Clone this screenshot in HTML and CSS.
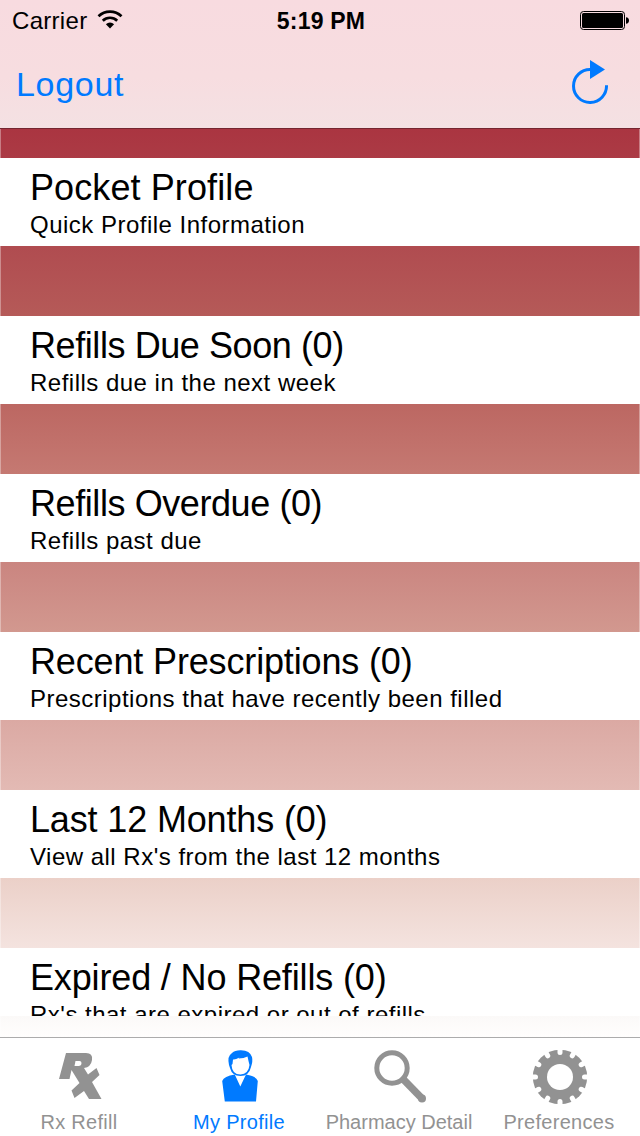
FILE: index.html
```html
<!DOCTYPE html>
<html lang="en">
<head>
    <meta charset="UTF-8">
    <meta name="viewport" content="width=device-width, initial-scale=1.0">
    <title>My Profile</title>
    <link rel="stylesheet" href="styles.css">
</head>
<body>

    <header class="header">
        <div class="status-bar">
            <div class="carrier">
                <span class="carrier-name">Carrier</span>
                <svg class="wifi" width="26" height="20" viewBox="0 0 26 20">
                    <path d="M1.5 6.2 A16.5 16.5 0 0 1 24.5 6.2 M5.8 10.7 A10.3 10.3 0 0 1 20.2 10.7" fill="none" stroke="#000" stroke-width="2.7"/>
                    <path d="M8.9 14.2 A6 6 0 0 1 17.1 14.2 L13 18.4 Z"/>
                </svg>
            </div>
            <div class="clock">5:19 PM</div>
            <div class="battery">
                <svg width="50" height="20" viewBox="0 0 50 20">
                    <rect x="0.5" y="0.5" width="44" height="18" rx="3" fill="none" stroke="#000"/>
                    <rect x="2" y="2" width="41" height="15" rx="1.5"/>
                    <path d="M46 6.2 Q49 6.4 49 9.5 T46 12.8 Z"/>
                </svg>
            </div>
        </div>
        <div class="nav-bar">
            <a class="logout" href="#">Logout</a>
            <svg class="refresh" width="38" height="46" viewBox="0 0 38 46">
                <path d="M18.5 9.5 A16.5 16.5 0 1 0 34.5 25.2" fill="none" stroke="#007aff" stroke-width="3"/>
                <path d="M18 0 L33 9.5 L18 19 Z" fill="#007aff"/>
            </svg>
        </div>
    </header>

    <!-- Profile sections -->
    <main class="content">
        <div class="item">
            <div class="title wide">Pocket Profile</div>
            <div class="subtitle">Quick Profile Information</div>
        </div>
        <div class="item">
            <div class="title tight">Refills Due Soon (0)</div>
            <div class="subtitle">Refills due in the next week</div>
        </div>
        <div class="item">
            <div class="title tight">Refills Overdue (0)</div>
            <div class="subtitle">Refills past due</div>
        </div>
        <div class="item">
            <div class="title">Recent Prescriptions (0)</div>
            <div class="subtitle">Prescriptions that have recently been filled</div>
        </div>
        <div class="item">
            <div class="title">Last 12 Months (0)</div>
            <div class="subtitle">View all Rx's from the last 12 months</div>
        </div>
        <div class="item last">
            <div class="title">Expired / No Refills (0)</div>
            <div class="subtitle">Rx's that are expired or out of refills</div>
        </div>
    </main>

    <nav class="tab-bar">
        <a class="tab" href="#">
            <svg width="60" height="60" viewBox="0 0 60 60">
                <path fill-rule="evenodd" d="M16 5 H36 Q43 5 42 12 Q41 19 34 20 L38 26.5 L46.5 20 L49.5 27 L42 34 L51.5 51 H39 L34 43 L24.5 50 L21.5 42.5 L29.5 35 L21.5 22 L19.5 31 H9 Z M25.5 13 L24.5 18 H28.5 Q31.5 18 31.5 15 Q31.500 13 29.5 13 Z"/>
            </svg>
            <span>Rx Refill</span>
        </a>
        <a class="tab active" href="#">
            <svg width="60" height="60" viewBox="0 0 60 60">
                <path fill-rule="evenodd" d="M19 17 Q17 8 22 5 Q25 2 31 2.2 Q40 2.5 42 9 Q43 13 41 19 Q39 28 30.5 28 Q22 28 20 20 Z M21.5 17 Q22 26.5 30.5 26.5 Q38.5 26 39.5 17 L38.5 13 L37.5 8.5 Q34 10.5 28.5 10.5 L29.5 9.5 Q25 12 23 11.5 L22.5 16 Z"/>
                <path d="M24.8 26.5 L30.3 38.5 L36 26.5 Q46 28 47.8 33 L46 53.5 H14.8 L12.2 33 Q14 28 24.8 26.5 Z"/>
            </svg>
            <span>My Profile</span>
        </a>
        <a class="tab pharmacy" href="#">
            <svg width="60" height="60" viewBox="0 0 60 60">
                <circle cx="22" cy="20" r="15.2" fill="none" stroke="#929292" stroke-width="5"/>
                <path d="M33 31 L52 50.5" stroke="#929292" stroke-width="7.5"/>
                <circle cx="52" cy="50.5" r="4"/>
            </svg>
            <span>Pharmacy Detail</span>
        </a>
        <a class="tab" href="#">
            <svg width="60" height="60" viewBox="0 0 60 60">
                <mask id="gear">
                    <rect width="60" height="60" fill="#fff"/>
                    <circle cx="30" cy="29" r="13" fill="#000"/>
                    <!-- twelve notches between the teeth -->
                    <path transform="translate(30 29)" fill="none" stroke="#000" stroke-width="5" stroke-linecap="round" d="M0 -24.5V-30 M12.25 -21.2L15 -26 M21.2 -12.25L26 -15 M24.5 0H30 M21.2 12.25L26 15 M12.25 21.2L15 26 M0 24.5V30 M-12.25 21.2L-15 26 M-21.2 12.25L-26 15 M-24.5 0H-30 M-21.2 -12.25L-26 -15 M-12.25 -21.2L-15 -26"/>
                </mask>
                <circle cx="30" cy="29" r="27.2" mask="url(#gear)"/>
            </svg>
            <span>Preferences</span>
        </a>
    </nav>

</body>
</html>
```
FILE: styles.css
```css
* {
    box-sizing: border-box;
}

body {
    margin: 0;
    width: 640px;
    height: 1136px;
    display: flex;
    flex-direction: column;
    font-family: "Liberation Sans", Arial, sans-serif;
    color: #000;
    background: #fff;
    overflow: hidden;
}

a {
    text-decoration: none;
}

.header {
    height: 129px;
    flex: none;
    background: linear-gradient(#f8dbe0, #f7dde0 60%, #f4e1e3);
    border-bottom: 1px solid #752630;
}

.status-bar {
    height: 40px;
    padding: 2px 10px 0 12px;
    display: grid;
    grid-template-columns: 1fr auto 1fr;
    align-items: center;
    font-size: 24px;
}

.carrier {
    display: flex;
    align-items: center;
    gap: 10px;
}

.carrier-name {
    letter-spacing: 0.3px;
}

.wifi {
    margin-bottom: 2px;
}

.clock {
    font-weight: bold;
    font-size: 23px;
    letter-spacing: 0.2px;
}

.battery {
    display: flex;
    justify-content: flex-end;
}

.nav-bar {
    height: 88px;
    padding: 0 30px 0 16px;
    display: flex;
    align-items: center;
    justify-content: space-between;
}

.logout {
    font-size: 34px;
    letter-spacing: 0.7px;
    color: #007aff;
}

.refresh {
    margin-bottom: 2px;
}

/* Gradient behind the white rows */
.content {
    height: 908px;
    flex: none;
    padding-top: 29px;
    display: flex;
    flex-direction: column;
    gap: 70px;
    border-left: 1px solid rgba(255, 255, 255, 0.35);
    border-right: 1px solid rgba(255, 255, 255, 0.35);
    background: linear-gradient(#aa3541 0, #b04c50 118px, #b55a58 187px, #bc6762 275px, #c57972 345px, #ca8580 433px, #d2988f 503px, #dba9a3 591px, #e3bab4 661px, #ebd0c8 749px, #f4e3df 819px, #fbf9f8 887px, #fffefd 908px);
    background-origin: border-box;
}

.item {
    height: 88px;
    flex: none;
    margin: 0 -1px;
    padding: 9px 30px 0;
    background: #fff;
    white-space: nowrap;
    overflow: hidden;
}

.item.last {
    height: 68px;
}

.title {
    font-size: 36px;
    line-height: 42px;
    letter-spacing: -0.15px;
}

.title.wide {
    letter-spacing: 0.1px;
}

.title.tight {
    letter-spacing: -0.42px;
}

.subtitle {
    font-size: 24px;
    line-height: 32px;
    letter-spacing: 0.49px;
}

.tab-bar {
    height: 99px;
    flex: none;
    display: grid;
    grid-template-columns: repeat(4, 160px);
    border-top: 1px solid #acacac;
    background: #fff;
}

.tab {
    display: flex;
    flex-direction: column;
    align-items: center;
    padding-top: 10px;
    font-size: 20px;
    line-height: 28px;
    letter-spacing: 0.3px;
    color: #929292;
    fill: #929292;
    white-space: nowrap;
}

.tab span {
    margin-right: 2px;
}

.pharmacy {
    letter-spacing: 0;
}

.active {
    color: #007aff;
    fill: #007aff;
}
```
